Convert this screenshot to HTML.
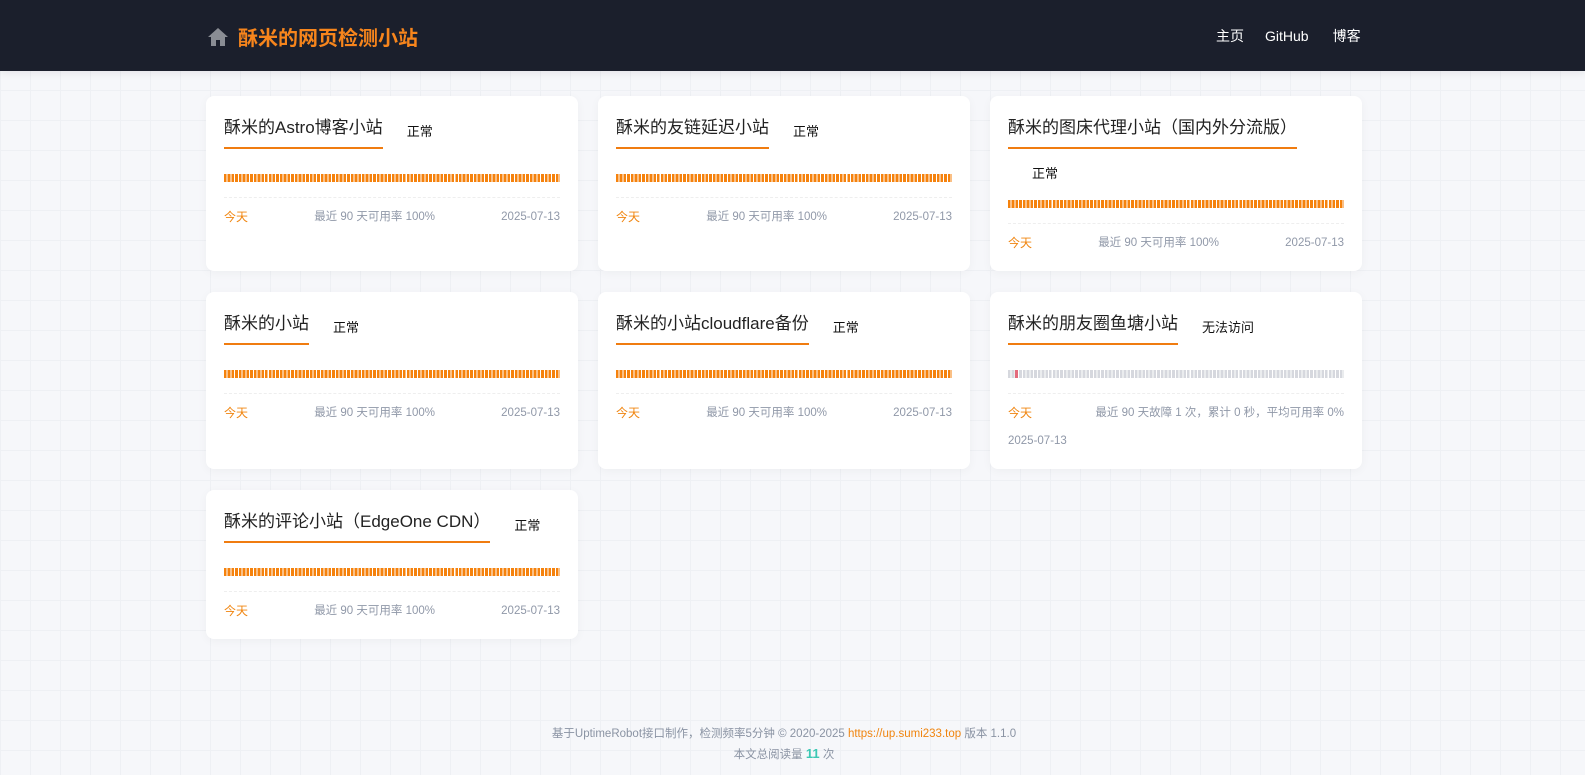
<!DOCTYPE html>
<html><head><meta charset="utf-8"><style>
*{margin:0;padding:0;box-sizing:border-box}
body{width:1585px;height:775px;overflow:hidden;font-family:"Liberation Sans","Noto Sans CJK SC",sans-serif;background-color:#f6f7fa;background-image:linear-gradient(#eef0f4 1px,transparent 1px),linear-gradient(90deg,#eef0f4 1px,transparent 1px);background-size:30px 30px;position:relative}
.hd{height:71px;background:#1b1f2c;position:relative;box-shadow:0 2px 8px rgba(0,0,0,.08)}
.logo{position:absolute;left:207px;top:22px;display:flex;align-items:center}
.logo b{color:#f7851c;font-size:20px;margin-left:9px;font-weight:bold}
.nav{position:absolute;top:26px;left:1216px;color:#fff;font-size:14px}
.nav span{margin-right:21px}
.grid{position:absolute;left:206px;top:96px;width:1156px;display:grid;grid-template-columns:372px 372px 372px;column-gap:20px;row-gap:21px}
.card{background:#fff;border-radius:8px;padding:18px 18px 18px;box-shadow:0 2px 10px rgba(0,0,0,.04)}
.tr{display:flex;flex-wrap:wrap;align-items:center;height:34px}
.t{font-size:17px;color:#222;line-height:26px;padding-bottom:6px;border-bottom:2px solid #f07c10;margin-top:1px}
.s{font-size:13px;color:#111;margin-left:24px;line-height:24px}
.bar{margin-top:26px;height:8px;background:repeating-linear-gradient(90deg,#f5820d 0 2.7px,#fff 2.7px 3.73px)}
.bar.g{background:repeating-linear-gradient(90deg,#d6d8de 0 2.7px,#fff 2.7px 3.73px);position:relative}
.bar.g i{position:absolute;left:7.46px;width:2.7px;height:8px;background:#e46a7c}
.ft{border-top:1px dashed #eee;margin-top:15px;padding-top:10px;display:flex;flex-wrap:wrap;justify-content:space-between;font-size:11.5px;color:#9098a8;line-height:19px}
.ft .d{color:#f0850f;font-size:12px}
.foot{position:absolute;top:724px;left:0;width:1568px;text-align:center;font-size:11.5px;color:#8a93a3;line-height:20px}
.foot a{color:#f0850f}
.foot b{color:#3cc8b4;font-size:13px}
</style></head><body>
<div class="hd">
<div class="logo"><svg width="22" height="20" viewBox="0 0 22 20"><path d="M11 1 L1 10 H4 V19 H9 V13 H13 V19 H18 V10 H21 Z" fill="#8a8d94"/></svg><b>酥米的网页检测小站</b></div>
<div class="nav"><span>主页</span><span style="margin-right:24px">GitHub</span><span>博客</span></div>
</div>
<div class="grid">
<div class="card"><div class="tr"><span class="t">酥米的Astro博客小站</span><span class="s">正常</span></div><div class="bar"></div><div class="ft"><span class="d">今天</span><span>最近 90 天可用率 100%</span><span>2025-07-13</span></div></div>
<div class="card"><div class="tr"><span class="t">酥米的友链延迟小站</span><span class="s">正常</span></div><div class="bar"></div><div class="ft"><span class="d">今天</span><span>最近 90 天可用率 100%</span><span>2025-07-13</span></div></div>
<div class="card"><div class="tr"><span class="t">酥米的图床代理小站（国内外分流版）</span></div><div class="s" style="margin-top:14px">正常</div><div class="bar" style="margin-top:14px"></div><div class="ft"><span class="d">今天</span><span>最近 90 天可用率 100%</span><span>2025-07-13</span></div></div>
<div class="card"><div class="tr"><span class="t">酥米的小站</span><span class="s">正常</span></div><div class="bar"></div><div class="ft"><span class="d">今天</span><span>最近 90 天可用率 100%</span><span>2025-07-13</span></div></div>
<div class="card"><div class="tr"><span class="t">酥米的小站cloudflare备份</span><span class="s">正常</span></div><div class="bar"></div><div class="ft"><span class="d">今天</span><span>最近 90 天可用率 100%</span><span>2025-07-13</span></div></div>
<div class="card"><div class="tr"><span class="t">酥米的朋友圈鱼塘小站</span><span class="s">无法访问</span></div><div class="bar g"><i></i></div><div class="ft"><span class="d">今天</span><span>最近 90 天故障 1 次，累计 0 秒，平均可用率 0%</span><span style="width:100%;margin-top:9px">2025-07-13</span></div></div>
<div class="card"><div class="tr"><span class="t">酥米的评论小站（EdgeOne CDN）</span><span class="s">正常</span></div><div class="bar"></div><div class="ft"><span class="d">今天</span><span>最近 90 天可用率 100%</span><span>2025-07-13</span></div></div>
</div>
<div class="foot">基于UptimeRobot接口制作，检测频率5分钟 © 2020-2025 <a>https://up.sumi233.top</a> 版本 1.1.0<br>本文总阅读量 <b>11</b> 次</div>
</body></html>
